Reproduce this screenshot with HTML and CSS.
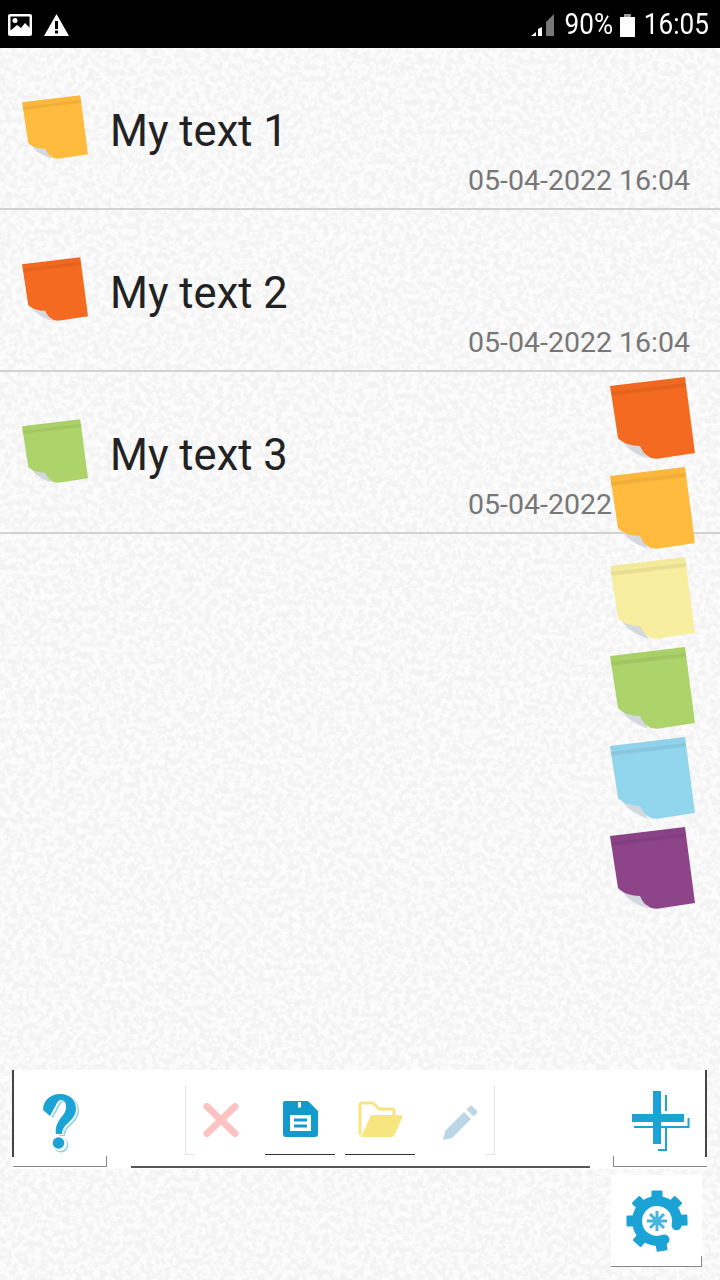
FILE: index.html
```html
<!DOCTYPE html>
<html lang="en">
<head>
    <meta charset="UTF-8">
    <meta name="viewport" content="width=device-width, initial-scale=1.0">
    <title>Sticky Notes</title>
    <link rel="stylesheet" href="styles.css">
</head>
<body>
    <!-- paper texture -->
    <svg class="paper" width="720" height="1280" aria-hidden="true">
        <filter id="grain" x="0" y="0" width="100%" height="100%">
            <feTurbulence type="fractalNoise" baseFrequency="0.17" numOctaves="3" seed="7"/>
            <feColorMatrix type="matrix" values="0 0 0 0 1  0 0 0 0 1  0 0 0 0 1  5 0 0 0 -2"/>
        </filter>
        <rect width="720" height="1280" fill="#f3f3f3"/>
        <rect width="720" height="1280" filter="url(#grain)" opacity="0.8"/>
    </svg>

    <!-- shared note shape -->
    <svg class="defs" width="0" height="0" aria-hidden="true">
        <symbol id="note" viewBox="0 0 85 83">
            <path d="M12 64 C16 71 26 78 38 81.500 L31 67Z" fill="#d6d8e0"/>
            <path d="M0 9 L75 0 L85 76 L49 81.500 C45 82 42 81.500 40 80.500 C35 78 32 74 30 69 C22 69 12 66 8 61Z" fill="currentColor"/>
            <path d="M0 9 L75 0 L76 9 L1 18Z" fill="#000" opacity="0.015"/>
            <path d="M1 15 L76 6 L76.500 10 L1.500 19Z" fill="#000" opacity="0.05"/>
        </symbol>
    </svg>

    <header class="status-bar">
        <div class="status-left">
            <svg width="24" height="22" viewBox="0 0 24 22">
                <rect width="24" height="22" rx="2" fill="#fff"/>
                <rect x="2.500" y="2.500" width="19" height="14" fill="#000"/>
                <circle cx="7" cy="6.500" r="2.500" fill="#fff"/>
                <path d="M2 19 L2 17 L9 11 L13 14 L17 9 L22 14 L22 19Z" fill="#fff"/>
            </svg>
            <svg width="25" height="22" viewBox="0 0 25 22">
                <path d="M12.500 0 L25 22 L0 22Z" fill="#fff"/>
                <rect x="11" y="7" width="3" height="8" fill="#000"/>
                <rect x="11" y="16.500" width="3" height="3" fill="#000"/>
            </svg>
        </div>
        <div class="status-right">
            <svg class="signal" width="24" height="23" viewBox="0 0 24 23">
                <path d="M0 22 L5 18 L5 22Z" fill="#fff"/>
                <path d="M7 15 L11 13 L11 22 L7 22Z" fill="#fff"/>
                <path d="M15 8 L23 0 L23 22 L15 22Z" fill="#777"/>
            </svg>
            <span class="status-text">90%</span>
            <svg class="battery" width="15" height="23" viewBox="0 0 15 23">
                <path d="M4 0 H11 V3 H4Z" fill="#999"/>
                <rect y="3" width="15" height="20" fill="#fff"/>
            </svg>
            <span class="status-text">16:05</span>
        </div>
    </header>

    <main class="list">
        <div class="row">
            <div class="row-top">
                <svg class="note-small amber"><use href="#note"/></svg>
                <span class="row-title">My text 1</span>
            </div>
            <div class="row-date">05-04-2022 16:04</div>
        </div>
        <div class="row">
            <div class="row-top">
                <svg class="note-small orange"><use href="#note"/></svg>
                <span class="row-title">My text 2</span>
            </div>
            <div class="row-date">05-04-2022 16:04</div>
        </div>
        <div class="row">
            <div class="row-top">
                <svg class="note-small green"><use href="#note"/></svg>
                <span class="row-title">My text 3</span>
            </div>
            <div class="row-date">05-04-2022 16:04</div>
        </div>
    </main>

    <!-- colour picker lies over the list -->
    <div class="palette">
        <svg class="note-big orange"><use href="#note"/></svg>
        <svg class="note-big amber"><use href="#note"/></svg>
        <svg class="note-big pale"><use href="#note"/></svg>
        <svg class="note-big green"><use href="#note"/></svg>
        <svg class="note-big blue"><use href="#note"/></svg>
        <svg class="note-big purple"><use href="#note"/></svg>
    </div>

    <section class="toolbar">
        <div class="toolbar-row">
            <button class="corner-btn corner-left">
                <svg width="44" height="62" viewBox="0 0 44 62">
                    <defs>
                        <path id="hook" d="M3 18 C3 8 11 2 20 2 C31 2 36 9 36 17 C36 25 29 30 25 34 C23 37 22 39 22 42 L16 42 C15 36 17 31 20 27 C23 23 26 20 26 15 C26 10 24 8 21 8 C19 8 17 10 16 13 L10 24Z"/>
                    </defs>
                    <use href="#hook" x="3" y="2" fill="#8fd5ee"/>
                    <circle cx="21" cy="53" r="7.500" fill="#8fd5ee"/>
                    <use href="#hook" x="1.500" y="1" fill="#fff"/>
                    <circle cx="20" cy="52" r="7" fill="#fff"/>
                    <use href="#hook" fill="#1ba3d6"/>
                    <circle cx="18.500" cy="51" r="5.800" fill="#1ba3d6"/>
                </svg>
            </button>
            <div class="tool-group">
                <button class="tool-btn tool-close">
                    <svg width="36" height="34" viewBox="0 0 36 34">
                        <path d="M4 3.500 L32 30.500 M32 3.500 L4 30.500" stroke="#fdc3c3" stroke-width="7" stroke-linecap="round"/>
                    </svg>
                </button>
                <button class="tool-btn tool-btn-on">
                    <svg width="35" height="36" viewBox="0 0 35 36">
                        <path d="M2 0 H25 L35 10 V33 Q35 36 32 36 H3 Q0 36 0 33 V2 Q0 0 2 0Z" fill="#1499cd"/>
                        <rect x="15" y="1" width="3" height="5.500" fill="#fff"/>
                        <rect x="7" y="14" width="21" height="16" fill="#fff"/>
                        <rect x="11" y="17.500" width="13" height="3" fill="#1499cd"/>
                        <rect x="11" y="23.500" width="13" height="3" fill="#1499cd"/>
                    </svg>
                </button>
                <button class="tool-btn tool-btn-on tool-open">
                    <svg width="45" height="36" viewBox="0 0 45 36">
                        <path d="M2 34 V4 Q2 2 4 2 H15 L21 8 H34 Q36 8 36 10 V15" fill="none" stroke="#f7e67f" stroke-width="3"/>
                        <path d="M13 14 H42 Q45 14 44 17 L37 33 Q36 36 33 36 H3Z" fill="#f7e67f"/>
                    </svg>
                </button>
                <button class="tool-btn tool-edit">
                    <svg width="35" height="35" viewBox="0 0 35 35">
                        <path d="M0 35 L2 26 L21 7 L28 14 L9 33Z" fill="#bcd6e6"/>
                        <path d="M23.500 4.500 L27 1 Q28 0 29 1 L34 6 Q35 7 34 8 L30.500 11.500Z" fill="#bcd6e6"/>
                    </svg>
                </button>
            </div>
            <button class="corner-btn corner-right">
                <svg width="58" height="60" viewBox="0 0 58 60">
                    <rect x="21" y="0" width="8" height="53" fill="#1ba3d6"/>
                    <rect x="0" y="23" width="52" height="8" fill="#1ba3d6"/>
                    <path d="M34 4 V20 M2 36 H56.500 V27 M34 36 V59 H26" fill="none" stroke="#1ba3d6" stroke-width="2"/>
                </svg>
            </button>
        </div>
        <div class="toolbar-rule"></div>
    </section>

    <div class="settings-row">
        <button class="settings-btn">
            <svg width="64" height="64" viewBox="0 0 64 64">
                <g fill="#1ba3d6">
                    <rect x="26.500" y="1.500" width="11" height="9" rx="1"/>
                    <rect x="26.500" y="1.500" width="11" height="9" rx="1" transform="rotate(45 32 32)"/>
                    <rect x="26.500" y="1.500" width="11" height="9" rx="1" transform="rotate(88 32 32)"/>
                    <rect x="26.500" y="1.500" width="11" height="9" rx="1" transform="rotate(170 32 32)"/>
                    <rect x="26.500" y="1.500" width="11" height="9" rx="1" transform="rotate(222 32 32)"/>
                    <rect x="26.500" y="1.500" width="11" height="9" rx="1" transform="rotate(270 32 32)"/>
                    <rect x="26.500" y="1.500" width="11" height="9" rx="1" transform="rotate(315 32 32)"/>
                </g>
                <path d="M51.600 36.200 A20 20 0 1 0 39.500 50.500" fill="none" stroke="#1ba3d6" stroke-width="10" stroke-linecap="round"/>
                <path d="M32 22 V42 M22 32 H42 M25 25 L39 39 M39 25 L25 39" stroke="#45b5dd" stroke-width="3"/>
            </svg>
        </button>
    </div>
</body>
</html>
```

FILE: styles.css
```css
* {
    box-sizing: border-box;
}
body {
    font-family: Roboto, "Liberation Sans", sans-serif;
    margin: 0;
    width: 720px;
    height: 1280px;
    position: relative;
    display: flex;
    flex-direction: column;
    overflow: hidden;
}
button {
    background: none;
    border: none;
    padding: 0;
}
.paper {
    position: absolute;
    left: 0;
    top: 0;
    z-index: -1;
}
.defs {
    position: absolute;
}

/* status bar */
.status-bar {
    height: 48px;
    background: #000;
    display: flex;
    justify-content: space-between;
    align-items: center;
    padding: 0 6px 0 8px;
    color: #fff;
}
.status-left {
    display: flex;
    gap: 12px;
    align-items: center;
    margin-top: 2px;
}
.status-right {
    display: flex;
    align-items: center;
}
.signal {
    margin-right: 6px;
    margin-top: 2px;
}
.battery {
    margin: 2px 4px 0 4px;
}
.status-text {
    font-size: 30px;
    line-height: 48px;
    transform: scaleX(0.87);
}

/* note list */
.list {
    flex: 1;
}
.row {
    height: 162px;
    padding: 47px 30px 0 22px;
    border-bottom: 2px solid #d2d2d2;
}
.row-top {
    display: flex;
    align-items: center;
    gap: 22px;
    height: 65px;
}
.row-title {
    font-size: 43.500px;
    color: #222;
    padding-top: 7px;
}
.row-date {
    text-align: right;
    font-size: 28.500px;
    line-height: 41px;
    color: #777;
}
.note-small {
    width: 66px;
    height: 65px;
}
.note-big {
    width: 85px;
    height: 83px;
}
.orange { color: #f56a21; }
.amber { color: #ffbb3d; }
.pale { color: #f8ee9f; }
.green { color: #add46a; }
.blue { color: #92d6ee; }
.purple { color: #8d4489; }

.palette {
    position: absolute;
    left: 610px;
    top: 377px;
    display: flex;
    flex-direction: column;
    gap: 7px;
}

/* bottom toolbar */
.toolbar {
    height: 99px;
    margin: 0 13px 0 12px;
    background: #fff;
}
.toolbar-row {
    height: 96px;
    display: flex;
    align-items: flex-start;
}
.toolbar-rule {
    height: 2px;
    margin: 0 117px 0 119px;
    background: #555;
}
.corner-btn {
    position: relative;
    width: 94px;
    height: 97px;
    display: flex;
    justify-content: center;
    align-items: flex-start;
    border-bottom: 1px solid #888;
}
.corner-left {
    padding: 22px 0 0 3px;
    margin-left: 1px;
}
.corner-right {
    margin-left: auto;
    padding: 21px 0 0 2px;
}
.corner-btn::before {
    content: "";
    position: absolute;
    top: 0;
    height: 87px;
    width: 2px;
    background: #444;
}
.corner-left::before {
    left: -1px;
}
.corner-right::before {
    right: 0;
}
.corner-btn::after {
    content: "";
    position: absolute;
    bottom: 0;
    height: 10px;
    width: 1px;
    background: #888;
}
.corner-left::after {
    right: 0;
}
.corner-right::after {
    left: 0;
}
.tool-group {
    position: relative;
    margin: 15px 0 0 78px;
    width: 310px;
    height: 70px;
    display: flex;
    justify-content: space-between;
    border-left: 1px solid #e4e4e4;
    border-right: 1px solid #e4e4e4;
}
.tool-group::before,
.tool-group::after {
    content: "";
    position: absolute;
    bottom: 0;
    width: 9px;
    height: 1px;
    background: #e4e4e4;
}
.tool-group::before {
    left: 0;
}
.tool-group::after {
    right: 0;
}
.tool-btn {
    width: 70px;
    height: 70px;
    display: flex;
    justify-content: center;
    padding-top: 16px;
    position: relative;
}
.tool-close {
    padding-top: 18px;
}
.tool-open {
    padding-left: 2px;
}
.tool-edit {
    padding: 20px 0 0 4px;
}
.tool-btn-on::after {
    content: "";
    position: absolute;
    left: 0;
    right: 0;
    bottom: 0;
    height: 1px;
    background: #333;
}

/* settings */
.settings-row {
    height: 111px;
    display: flex;
    justify-content: flex-end;
    align-items: flex-start;
    padding: 6px 18px 0 0;
}
.settings-btn {
    position: relative;
    width: 91px;
    height: 92px;
    background: #fff;
    border-bottom: 1px solid #888;
    display: flex;
    justify-content: center;
    padding-top: 14px;
}
.settings-btn::after {
    content: "";
    position: absolute;
    right: 0;
    bottom: 0;
    width: 1px;
    height: 10px;
    background: #888;
}
```
